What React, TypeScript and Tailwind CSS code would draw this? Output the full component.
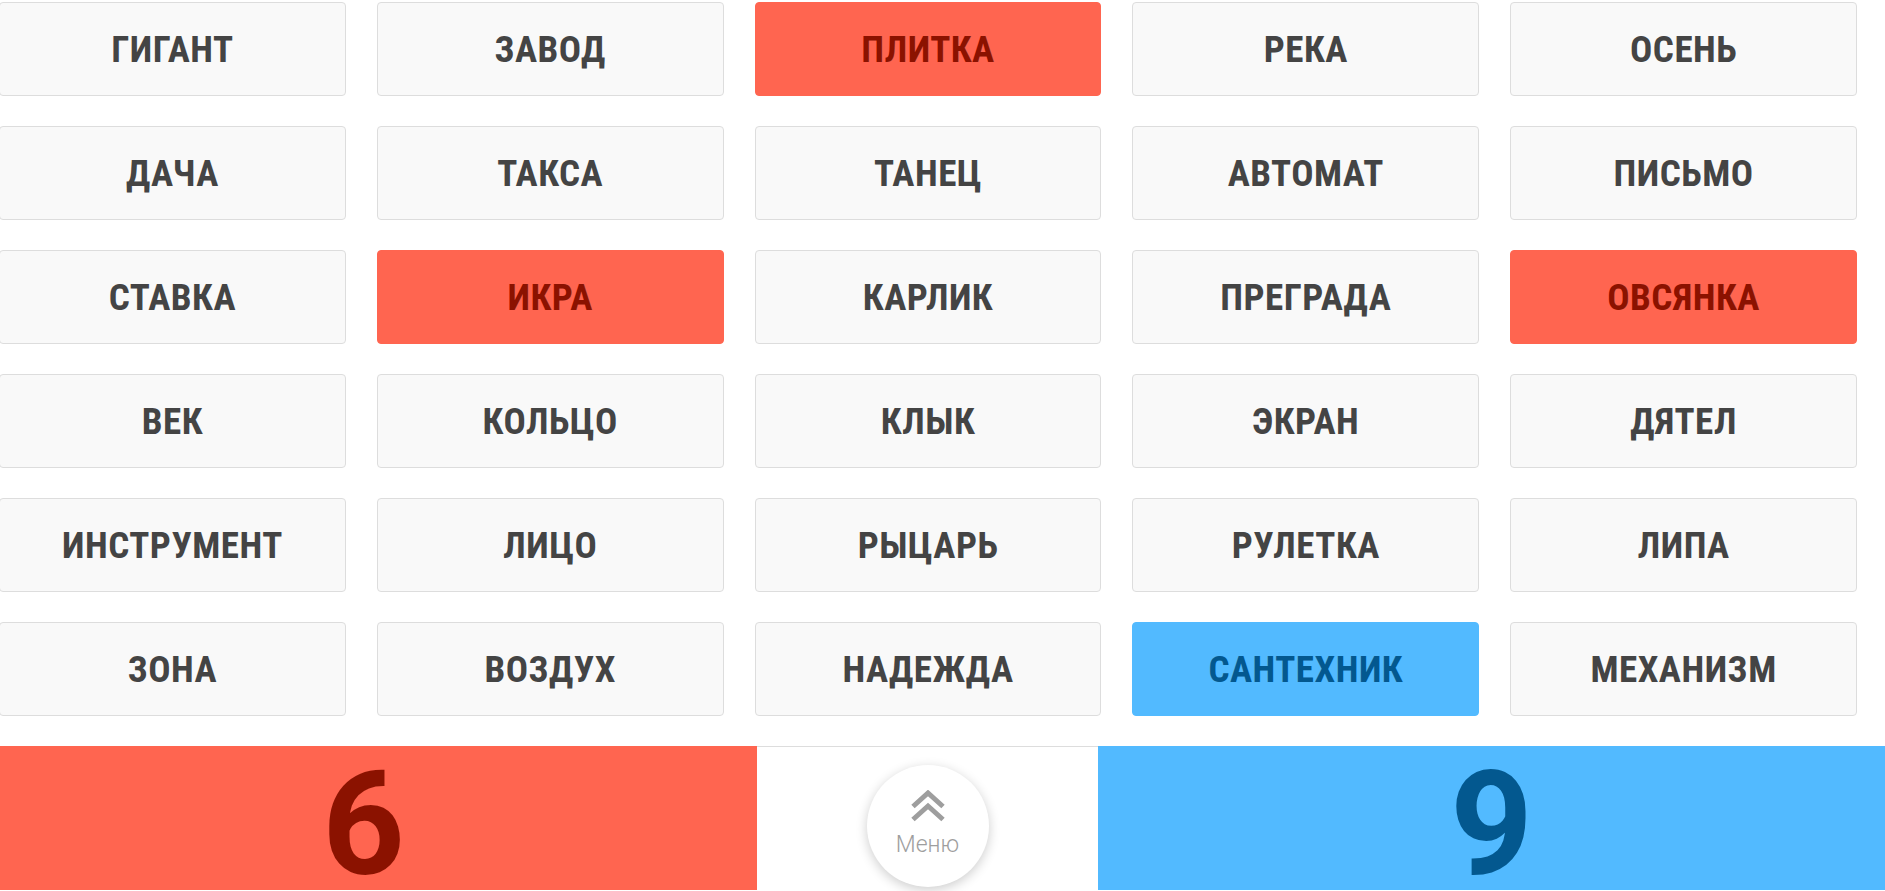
type Team = "none" | "red" | "blue";

const words: { text: string; team: Team }[] = [
  { text: "ГИГАНТ", team: "none" },
  { text: "ЗАВОД", team: "none" },
  { text: "ПЛИТКА", team: "red" },
  { text: "РЕКА", team: "none" },
  { text: "ОСЕНЬ", team: "none" },
  { text: "ДАЧА", team: "none" },
  { text: "ТАКСА", team: "none" },
  { text: "ТАНЕЦ", team: "none" },
  { text: "АВТОМАТ", team: "none" },
  { text: "ПИСЬМО", team: "none" },
  { text: "СТАВКА", team: "none" },
  { text: "ИКРА", team: "red" },
  { text: "КАРЛИК", team: "none" },
  { text: "ПРЕГРАДА", team: "none" },
  { text: "ОВСЯНКА", team: "red" },
  { text: "ВЕК", team: "none" },
  { text: "КОЛЬЦО", team: "none" },
  { text: "КЛЫК", team: "none" },
  { text: "ЭКРАН", team: "none" },
  { text: "ДЯТЕЛ", team: "none" },
  { text: "ИНСТРУМЕНТ", team: "none" },
  { text: "ЛИЦО", team: "none" },
  { text: "РЫЦАРЬ", team: "none" },
  { text: "РУЛЕТКА", team: "none" },
  { text: "ЛИПА", team: "none" },
  { text: "ЗОНА", team: "none" },
  { text: "ВОЗДУХ", team: "none" },
  { text: "НАДЕЖДА", team: "none" },
  { text: "САНТЕХНИК", team: "blue" },
  { text: "МЕХАНИЗМ", team: "none" },
];

const cardStyles: Record<Team, string> = {
  none: "bg-[#f9f9f9] border-[#dddddd] text-[#444444]",
  red: "bg-[#ff6550] border-[#ff6550] text-[#8b1200]",
  blue: "bg-[#52baff] border-[#52baff] text-[#03588f]",
};

function WordCard({ text, team }: { text: string; team: Team }) {
  return (
    <div
      className={
        "h-[94px] flex items-center justify-center rounded-[4px] border " +
        cardStyles[team]
      }
    >
      <span className="font-['Roboto_Condensed','Roboto',sans-serif] font-bold text-[37px] leading-none tracking-[0.5px] [font-stretch:condensed]">
        {text}
      </span>
    </div>
  );
}

function DoubleChevron() {
  return (
    <svg width="34" height="32" viewBox="0 0 34 32" fill="none" stroke="#9e9e9e" strokeWidth="5" strokeLinejoin="miter">
      <polyline points="2,16.5 17,3 32,16.5" />
      <polyline points="2,29.5 17,16 32,29.5" />
    </svg>
  );
}

export default function App() {
  return (
    <div className="h-[891px] overflow-hidden bg-white font-['Roboto',sans-serif]">
      <div className="pt-[2px] -ml-px pr-[28px] grid grid-cols-5 gap-x-[31px] gap-y-[30px]">
        {words.map((w) => (
          <WordCard key={w.text} text={w.text} team={w.team} />
        ))}
      </div>

      {/* score bar */}
      <div className="mt-[30px] h-[144px] flex border-t border-[#dddddd]">
        <div className="w-[757px] -mt-px bg-[#ff6550] flex justify-center pt-[19px] pr-[30px]">
          <span className="font-bold text-[144px] leading-[120px] text-[#8b1200]">6</span>
        </div>
        <div className="w-[341px] flex justify-center pt-[18px]">
          <button className="w-[122px] h-[122px] rounded-full bg-white shadow-[0_3px_12px_rgba(0,0,0,0.2)] flex flex-col items-center pt-[25px]">
            <DoubleChevron />
            <span className="font-light text-[23px] leading-none text-[#9e9e9e] mt-[11px]">Меню</span>
          </button>
        </div>
        <div className="flex-1 -mt-px bg-[#52baff] flex justify-center pt-[19px]">
          <span className="font-bold text-[144px] leading-[120px] text-[#03588f]">9</span>
        </div>
      </div>
    </div>
  );
}
